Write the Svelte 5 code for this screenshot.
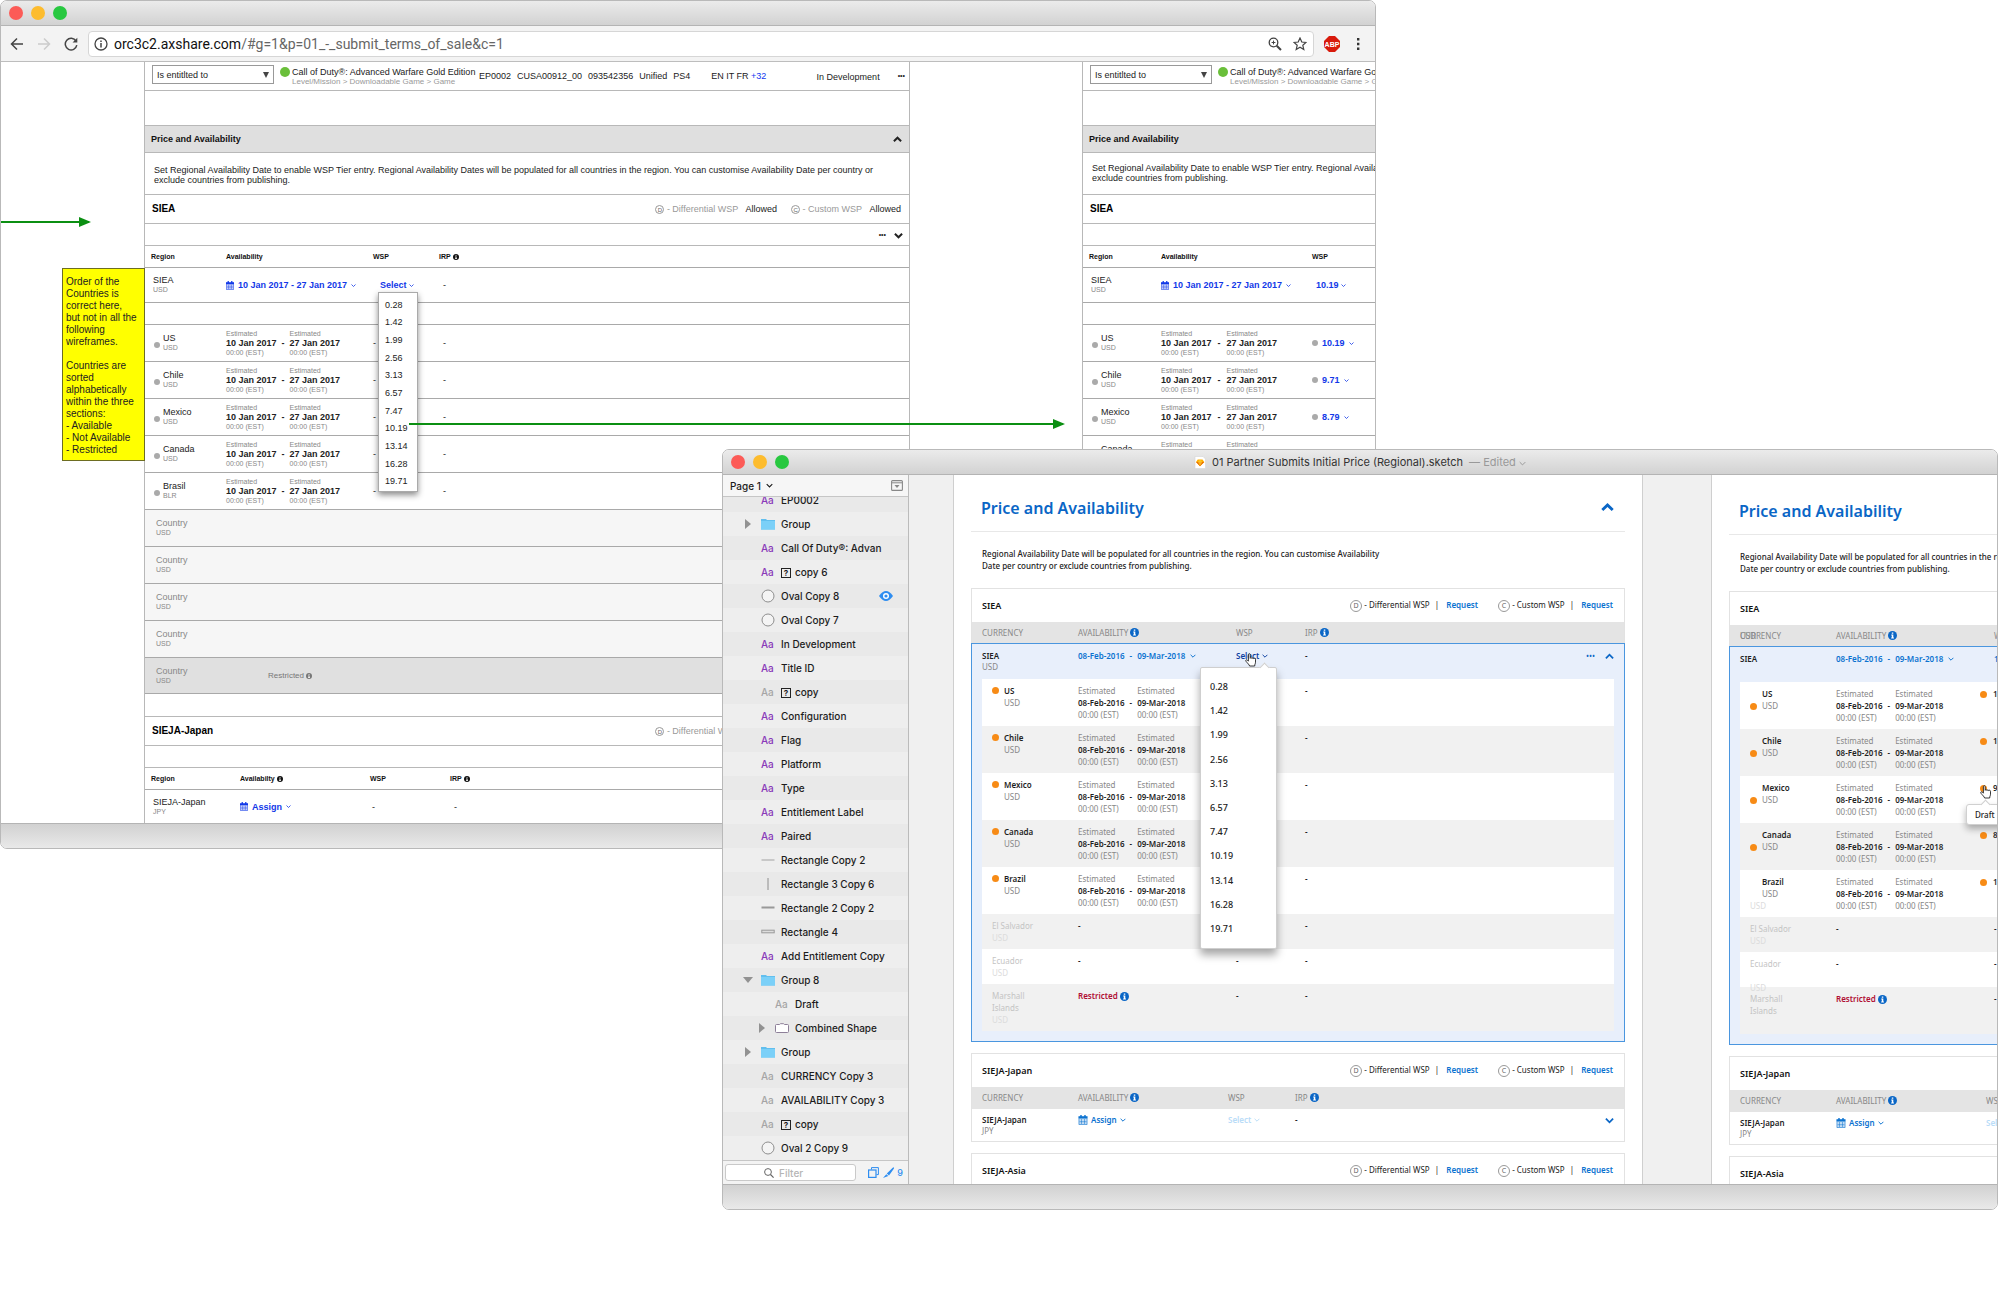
<script lang="ts">
	/**
	 * Desktop with two overlapping windows: the wireframe in a browser and the
	 * visual design of the same pricing table in a design tool.
	 */

	interface Layer {
		name: string;
		icon: 'text' | 'muted' | 'folder' | 'oval' | 'line' | 'vline' | 'bar' | 'box' | 'shape';
		glyph?: boolean;
		open?: boolean;
		closed?: boolean;
		nested?: boolean;
		eye?: boolean;
	}

	const prices = ['0.28', '1.42', '1.99', '2.56', '3.13', '6.57', '7.47', '10.19', '13.14', '16.28', '19.71'];

	const wireCountries = [
		{ name: 'US', currency: 'USD', wsp: '10.19' },
		{ name: 'Chile', currency: 'USD', wsp: '9.71' },
		{ name: 'Mexico', currency: 'USD', wsp: '8.79' },
		{ name: 'Canada', currency: 'USD', wsp: '8.79' },
		{ name: 'Brasil', currency: 'BLR', wsp: '10.19' }
	];

	const countries = [
		{ name: 'US', wsp: '10.19' },
		{ name: 'Chile', wsp: '10.19' },
		{ name: 'Mexico', wsp: '9.71' },
		{ name: 'Canada', wsp: '8.79' },
		{ name: 'Brazil', wsp: '10.19' }
	];

	const layers: Layer[] = [
		{ name: 'EP0002', icon: 'text' },
		{ name: 'Group', icon: 'folder', closed: true },
		{ name: 'Call Of Duty®: Advan', icon: 'text' },
		{ name: 'copy 6', icon: 'text', glyph: true },
		{ name: 'Oval Copy 8', icon: 'oval', eye: true },
		{ name: 'Oval Copy 7', icon: 'oval' },
		{ name: 'In Development', icon: 'text' },
		{ name: 'Title ID', icon: 'text' },
		{ name: 'copy', icon: 'muted', glyph: true },
		{ name: 'Configuration', icon: 'text' },
		{ name: 'Flag', icon: 'text' },
		{ name: 'Platform', icon: 'text' },
		{ name: 'Type', icon: 'text' },
		{ name: 'Entitlement Label', icon: 'text' },
		{ name: 'Paired', icon: 'text' },
		{ name: 'Rectangle Copy 2', icon: 'line' },
		{ name: 'Rectangle 3 Copy 6', icon: 'vline' },
		{ name: 'Rectangle 2 Copy 2', icon: 'bar' },
		{ name: 'Rectangle 4', icon: 'box' },
		{ name: 'Add Entitlement Copy', icon: 'text' },
		{ name: 'Group 8', icon: 'folder', open: true },
		{ name: 'Draft', icon: 'muted', nested: true },
		{ name: 'Combined Shape', icon: 'shape', nested: true, closed: true },
		{ name: 'Group', icon: 'folder', closed: true },
		{ name: 'CURRENCY Copy 3', icon: 'muted' },
		{ name: 'AVAILABILITY Copy 3', icon: 'muted' },
		{ name: 'copy', icon: 'muted', glyph: true },
		{ name: 'Oval 2 Copy 9', icon: 'oval' }
	];
</script>

{#snippet chevron(size: number, up = false, weight = 1.6)}
	<svg class="chevron" width={size} height={size} viewBox="0 0 10 10" aria-hidden="true">
		<path d={up ? 'M1 7l4-4 4 4' : 'M1 3l4 4 4-4'} fill="none" stroke="currentColor" stroke-width={weight} />
	</svg>
{/snippet}

{#snippet info(size: number)}
	<svg class="info" width={size} height={size} viewBox="0 0 10 10" aria-hidden="true">
		<circle cx="5" cy="5" r="5" fill="currentColor" />
		<path d="M4.2 1.6h1.7v1.5H4.2zM3.6 4h2.3v3.2h.7v1H3.5v-1h.7V5h-.6z" fill="#fff" />
	</svg>
{/snippet}

{#snippet calendar()}
	<svg class="calendar" width="10" height="10" viewBox="0 0 9 10" aria-hidden="true">
		<path d="M0 1.5h9V10H0z" fill="currentColor" opacity=".25" />
		<path d="M.5 3.5v6h8v-6M3 4v5M6 4v5M1 6.7h7" fill="none" stroke="currentColor" stroke-width=".5" />
		<path d="M0 1.3h9v2.2H0zM1.8 0h1.4v2H1.8zM5.8 0h1.4v2H5.8z" fill="currentColor" />
	</svg>
{/snippet}

{#snippet hand()}
	<svg class="hand" width="12" height="14" viewBox="0 0 12 14" aria-hidden="true">
		<path
			d="M3.4 8.2V1.7c0-1.4 1.8-1.4 1.8 0v3.6c0-1 1.7-1 1.8.2 0-.9 1.7-.9 1.8.3 0-.8 1.7-.8 1.7.5v2.9c0 1.5-.8 2-.8 3.8H4.6C4.3 11.6 2.7 10.5 1 8.3c-.9-1.3.6-2 1.4-1.1z"
			fill="#fff"
			stroke="#222"
			stroke-width=".9"
		/>
	</svg>
{/snippet}

{#snippet lights()}
	<div class="lights">
		<button class="light close" aria-label="Close"></button>
		<button class="light minimise" aria-label="Minimise"></button>
		<button class="light zoom" aria-label="Zoom"></button>
	</div>
{/snippet}

{#snippet dates(from: string, to: string)}
	<div class="dates">
		<div class="date"><span>Estimated</span><b>{from}</b><span>00:00 (EST)</span></div>
		<b class="dash">-</b>
		<div class="date"><span>Estimated</span><b>{to}</b><span>00:00 (EST)</span></div>
	</div>
{/snippet}

{#snippet wireSection(name: string)}
	<div class="wire-section">
		<h3>{name}</h3>
		<span class="permit"><i class="letter">D</i> - Differential WSP <b>Allowed</b></span>
		<span class="permit"><i class="letter">C</i> - Custom WSP <b>Allowed</b></span>
	</div>
{/snippet}

{#snippet wireBoard(second: boolean)}
	<section class="wire-board" class:second>
		<div class="wire-product">
			<select aria-label="Relationship"><option>Is entitlted to</option></select>
			<i class="green-dot"></i>
			<div class="product-name">
				<span>Call of Duty®: Advanced Warfare Gold Edition</span>
				<small>Level/Mission &gt; Downloadable Game &gt; Game</small>
			</div>
			{#if !second}
				<span class="code">EP0002</span>
				<span class="code">CUSA00912_00</span>
				<span class="code">093542356</span>
				<span class="code">Unified</span>
				<span class="code">PS4</span>
				<span class="languages">EN IT FR <a href="#languages">+32</a></span>
				<span class="stage">In Development</span>
				<button class="more" aria-label="More">•••</button>
			{/if}
		</div>
		<div class="wire-heading">
			<h2>Price and Availability</h2>
			{#if !second}
				<button aria-label="Collapse">{@render chevron(9, true, 2.2)}</button>
			{/if}
		</div>
		<p class="wire-intro">
			Set Regional Availability Date to enable WSP Tier entry. Regional Availability Dates will be populated for all countries in the region. You can customise Availability Date per country or<br />exclude countries from publishing.
		</p>
		{#if second}
			<div class="wire-section"><h3>SIEA</h3></div>
		{:else}
			{@render wireSection('SIEA')}
		{/if}
		<div class="wire-tools">
			{#if !second}
				<button class="more" aria-label="More">•••</button>
				<button aria-label="Expand">{@render chevron(9, false, 2.2)}</button>
			{/if}
		</div>
		<table class="wire-table">
			<colgroup><col class="w-region" /><col class="w-dates" /><col class="w-wsp" /><col /></colgroup>
			<thead>
				<tr>
					<th>Region</th>
					<th>Availability</th>
					<th>WSP</th>
					<th>{#if !second}IRP {@render info(6)}{/if}</th>
				</tr>
			</thead>
			<tbody>
				<tr class="region-row">
					<td><div class="place"><span>SIEA</span><small>USD</small></div></td>
					<td>
						<button class="wire-link">{@render calendar()} <span>10 Jan 2017 - 27 Jan 2017</span> {@render chevron(5)}</button>
					</td>
					<td>
						<div class="anchor">
							<button class="wire-link">{second ? '10.19' : 'Select'} {@render chevron(5)}</button>
							{#if !second}
								<ul class="wire-menu">
									{#each prices as price}
										<li><button>{price}</button></li>
									{/each}
								</ul>
							{/if}
						</div>
					</td>
					<td class="value">{second ? '' : '-'}</td>
				</tr>
				<tr class="gap-row"><td colspan="4"></td></tr>
				{#each second ? wireCountries.slice(0, 4) : wireCountries as country}
					<tr>
						<td>
							<div class="place child"><i class="grey-dot"></i><span>{country.name}</span><small>{country.currency}</small></div>
						</td>
						<td>{@render dates('10 Jan 2017', '27 Jan 2017')}</td>
						<td>
							{#if second}
								<button class="wire-link"><i class="grey-dot"></i> {country.wsp} {@render chevron(5)}</button>
							{:else}
								-
							{/if}
						</td>
						<td class="value">{second ? '' : '-'}</td>
					</tr>
				{/each}
				{#if !second}
					{#each { length: 5 } as _, i}
						<tr class="disabled" class:restricted={i === 4}>
							<td><div class="place"><span>Country</span><small>USD</small></div></td>
							<td colspan="3">
								{#if i === 4}<span class="restricted-note">Restricted {@render info(6)}</span>{/if}
							</td>
						</tr>
					{/each}
				{/if}
			</tbody>
		</table>
		{#if !second}
			<div class="wire-blank"></div>
			{@render wireSection('SIEJA-Japan')}
			<div class="wire-tools"></div>
			<table class="wire-table japan">
				<colgroup><col class="w-region" /><col class="w-dates" /><col class="w-wsp" /><col /></colgroup>
				<thead>
					<tr><th>Region</th><th>Availabilty {@render info(6)}</th><th>WSP</th><th>IRP {@render info(6)}</th></tr>
				</thead>
				<tbody>
					<tr class="region-row">
						<td><div class="place"><span>SIEJA-Japan</span><small>JPY</small></div></td>
						<td><button class="wire-link">{@render calendar()} <span>Assign</span> {@render chevron(5)}</button></td>
						<td class="dash-cell">-</td>
						<td class="value">-</td>
					</tr>
				</tbody>
			</table>
		{/if}
	</section>
{/snippet}

{#snippet cardTitle(name: string, requests: boolean)}
	<div class="card-title">
		<h3>{name}</h3>
		{#if requests}
			<span class="request"><i class="letter">D</i> - Differential WSP <span class="bar">|</span> <a href="#differential">Request</a></span>
			<span class="request"><i class="letter">C</i> - Custom WSP <span class="bar">|</span> <a href="#custom">Request</a></span>
		{/if}
	</div>
{/snippet}

{#snippet designBoard(second: boolean)}
	<section class="board" class:second>
		<div class="board-inner">
			<div class="board-heading">
				<h2>Price and Availability</h2>
				<button aria-label="Collapse">{@render chevron(13, true, 2.2)}</button>
			</div>
			<p class="intro">
				Regional Availability Date will be populated for all countries in the region. You can customise Availability<br />Date per country or exclude countries from publishing.
			</p>
			<div class="card">
				{@render cardTitle('SIEA', !second)}
				<table class="region-table">
					<colgroup><col class="c-edge" /><col class="c-name" /><col class="c-dates" /><col class="c-wsp" /><col /><col class="c-edge" /></colgroup>
					<thead>
						<tr>
							<th></th>
							<th>
								{#if second}<span class="overprint" aria-hidden="true">USD</span>{/if}CURRENCY
							</th>
							<th>AVAILABILITY {@render info(9)}</th>
							<th>WSP</th>
							<th>{#if !second}IRP {@render info(9)}{/if}</th>
							<th></th>
						</tr>
					</thead>
					<tbody>
						<tr class="summary">
							<td></td>
							<td><b>SIEA</b>{#if !second}<span class="currency">USD</span>{/if}</td>
							<td>
								<button class="link range"><span>08-Feb-2016</span><span>-</span><span>09-Mar-2018</span>{@render chevron(6)}</button>
							</td>
							<td>
								<div class="anchor">
									{#if second}
										<button class="link">10.19</button>
									{:else}
										<button class="link select">Select {@render chevron(6)}</button>
										{@render hand()}
										<ul class="menu">
											{#each prices as price}
												<li><button>{price}</button></li>
											{/each}
										</ul>
									{/if}
								</div>
							</td>
							<td>
								{#if !second}
									<div class="summary-end">
										<b>-</b>
										<button aria-label="More">•••</button>
										<button aria-label="Collapse">{@render chevron(9, true, 2)}</button>
									</div>
								{/if}
							</td>
							<td></td>
						</tr>
						{#each countries as country}
							<tr class="country">
								<td></td>
								<td>
									<div class="label">
										{#if !second || country.name !== 'Brazil'}<i class="orange-dot"></i>{/if}
										<b>{country.name}</b>
										<span>USD</span>
										{#if second && country.name === 'Brazil'}<span class="ghost">USD</span>{/if}
									</div>
								</td>
								<td>{@render dates('08-Feb-2016', '09-Mar-2018')}</td>
								<td>
									{#if second}
										<div class="anchor draft-wsp">
											<i class="orange-dot"></i><b>{country.wsp}</b>
											{#if country.name === 'Mexico'}
												{@render hand()}
												<span class="tooltip" role="tooltip">Draft</span>
											{/if}
										</div>
									{:else}
										<b>-</b>
									{/if}
								</td>
								<td><b>{second ? '' : '-'}</b></td>
								<td></td>
							</tr>
						{/each}
						<tr class="country off">
							<td></td>
							<td><div class="off-label">El Salvador<span>USD</span></div></td>
							<td><b>-</b></td><td><b>-</b></td><td><b>{second ? '' : '-'}</b></td><td></td>
						</tr>
						<tr class="country off">
							<td></td>
							<td><div class="off-label">Ecuador{#if second}<br />&nbsp;{/if}<span>USD</span></div></td>
							<td><b>-</b></td><td><b>-</b></td><td><b>{second ? '' : '-'}</b></td><td></td>
						</tr>
						<tr class="country off tall">
							<td></td>
							<td><div class="off-label">Marshall<br />Islands{#if !second}<span>USD</span>{/if}</div></td>
							<td><strong>Restricted {@render info(9)}</strong></td><td><b>-</b></td><td><b>{second ? '' : '-'}</b></td><td></td>
						</tr>
						<tr class="foot"><td colspan="6"></td></tr>
					</tbody>
				</table>
			</div>
			<div class="card">
				{@render cardTitle('SIEJA-Japan', !second)}
				<table class="region-table japan">
					<colgroup><col class="c-edge" /><col class="c-name" /><col class="c-dates" /><col class="c-wsp" /><col /><col class="c-edge" /></colgroup>
					<thead>
						<tr>
							<th></th>
							<th>CURRENCY</th>
							<th>AVAILABILITY {@render info(9)}</th>
							<th>WSP</th>
							<th>{#if !second}IRP {@render info(9)}{/if}</th>
							<th></th>
						</tr>
					</thead>
					<tbody>
						<tr class="plain">
							<td></td>
							<td><b>SIEJA-Japan</b><span class="currency">JPY</span></td>
							<td><button class="link">{@render calendar()} Assign {@render chevron(6)}</button></td>
							<td><button class="link faded" disabled>Select {@render chevron(6)}</button></td>
							<td>
								{#if !second}
									<div class="summary-end">
										<b>-</b>
										<button aria-label="Expand">{@render chevron(9, false, 2)}</button>
									</div>
								{/if}
							</td>
							<td></td>
						</tr>
					</tbody>
				</table>
			</div>
			<div class="card last">
				{@render cardTitle('SIEJA-Asia', !second)}
			</div>
		</div>
	</section>
{/snippet}

<main class="desktop">
	<section class="window browser" aria-label="Browser">
		<header class="titlebar">{@render lights()}</header>
		<div class="toolbar">
			<button aria-label="Back">
				<svg width="14" height="14" viewBox="0 0 14 14"><path d="M13 7H2M7 1.5L1.5 7 7 12.5" fill="none" stroke="#444" stroke-width="1.5" /></svg>
			</button>
			<button aria-label="Forward" disabled>
				<svg width="14" height="14" viewBox="0 0 14 14"><path d="M1 7h11M7 1.5L12.5 7 7 12.5" fill="none" stroke="#ccc" stroke-width="1.5" /></svg>
			</button>
			<button aria-label="Reload">
				<svg width="14" height="14" viewBox="0 0 14 14">
					<path d="M12 4A5.8 5.8 0 1 0 12.8 8.2" fill="none" stroke="#444" stroke-width="1.5" />
					<path d="M13.3.8v4.7H8.6z" fill="#444" />
				</svg>
			</button>
			<div class="address">
				<svg width="14" height="14" viewBox="0 0 14 14" aria-hidden="true">
					<circle cx="7" cy="7" r="6" fill="none" stroke="#444" stroke-width="1.3" />
					<path d="M7 6v4.5M7 3.4v1.5" stroke="#444" stroke-width="1.5" />
				</svg>
				<a href="#g=1&p=01_-_submit_terms_of_sale&c=1"><b>orc3c2.axshare.com</b>/#g=1&amp;p=01_-_submit_terms_of_sale&amp;c=1</a>
				<button aria-label="Zoom in">
					<svg width="14" height="14" viewBox="0 0 14 14">
						<circle cx="5.5" cy="5.5" r="4.3" fill="none" stroke="#444" stroke-width="1.3" />
						<path d="M8.7 8.7L13 13" stroke="#444" stroke-width="2" />
						<path d="M5.5 3.6v3.8M3.6 5.5h3.8" stroke="#444" />
					</svg>
				</button>
				<button aria-label="Bookmark">
					<svg width="14" height="14" viewBox="0 0 14 14">
						<path d="M7 1l1.8 4 4.2.4-3.200 2.900 1 4.200L7 10.300l-3.800 2.200 1-4.200L1 5.400 5.200 5z" fill="none" stroke="#444" stroke-width="1.2" />
					</svg>
				</button>
			</div>
			<button class="adblock" aria-label="Adblock">
				<svg width="16" height="16" viewBox="0 0 16 16">
					<path d="M5 0h6l5 5v6l-5 5H5l-5-5V5z" fill="#d81a0c" />
					<text x="8" y="10.5" fill="#fff" font-size="7" font-weight="700" text-anchor="middle" font-family="Liberation Sans, sans-serif">ABP</text>
				</svg>
			</button>
			<button aria-label="Menu">
				<svg width="4" height="14" viewBox="0 0 4 14"><path d="M1 1h2.4v2.4H1zM1 5.8h2.4v2.4H1zM1 10.6h2.4V13H1z" fill="#333" /></svg>
			</button>
		</div>
		<div class="wire-canvas">
			<aside class="note">
				<p>Order of the Countries is correct here,<br />but not in all the following wireframes.</p>
				<p>Countries are sorted alphabetically within the three sections:<br />- Available<br />- Not Available<br />- Restricted</p>
			</aside>
			<i class="arrow incoming"></i>
			<i class="arrow outgoing"></i>
			{@render wireBoard(false)}
			{@render wireBoard(true)}
		</div>
		<footer class="statusbar"></footer>
	</section>

	<section class="window sketch" aria-label="Design tool">
		<header class="titlebar">
			{@render lights()}
			<h1>
				<svg width="12" height="13" viewBox="0 0 12 13" aria-hidden="true">
					<path d="M1 .5h8l2.5 2.5v9.5H1z" fill="#fff" stroke="#d5d5d5" stroke-width=".6" />
					<path d="M3.7 3.5h4.8L10.3 6 6 10.3 2 6z" fill="#fdad00" />
					<path d="M2 6h8.3L6 10.3z" fill="#ea6c00" />
					<path d="M4 6l2-2.5L8.2 6 6 10z" fill="#fdd231" opacity=".7" />
				</svg>
				01 Partner Submits Initial Price (Regional).sketch <span>— Edited {@render chevron(7, false, 1.4)}</span>
			</h1>
		</header>
		<div class="workspace">
			<aside class="sidebar">
				<div class="pages">
					<button>Page 1 {@render chevron(7)}</button>
					<button aria-label="Toggle page list">
						<svg width="12" height="11" viewBox="0 0 12 11">
							<rect x=".6" y=".6" width="10.8" height="9.8" rx="1" fill="none" stroke="#888" stroke-width="1.1" />
							<path d="M1 2.8h10" stroke="#888" />
							<path d="M3.5 5h5L6 8z" fill="#888" />
						</svg>
					</button>
				</div>
				<div class="layers">
					<ul>
						{#each layers as layer}
							<li class:nested={layer.nested}>
								<span class="expander">
									{#if layer.closed}
										<svg width="6" height="10" viewBox="0 0 6 10" aria-hidden="true"><path d="M0 0l6 5-6 5z" fill="#929292" /></svg>
									{:else if layer.open}
										<svg width="10" height="6" viewBox="0 0 10 6" aria-hidden="true"><path d="M0 0h10L5 6z" fill="#929292" /></svg>
									{/if}
								</span>
								{#if layer.icon === 'text' || layer.icon === 'muted'}
									<span class="aa" class:muted={layer.icon === 'muted'}>Aa</span>
								{:else}
									<svg class="layer-icon" width="14" height="14" viewBox="0 0 14 14" aria-hidden="true">
										{#if layer.icon === 'folder'}
											<path d="M0 2h5l1 1h8v9.5H0z" fill="#62bfee" /><path d="M0 4h14v8.5H0z" fill="#7bd0f8" />
										{:else if layer.icon === 'oval'}
											<circle cx="7" cy="7" r="6" fill="#f4f4f4" stroke="#8e8e8e" />
										{:else if layer.icon === 'line'}
											<path d="M.5 7h13" stroke="#a2a2a2" />
										{:else if layer.icon === 'vline'}
											<path d="M7 1v12" stroke="#8e8e8e" />
										{:else if layer.icon === 'bar'}
											<path d="M.5 6.5h13" stroke="#999" stroke-width="2" />
										{:else if layer.icon === 'box'}
											<rect x=".8" y="5.2" width="12.4" height="2.6" fill="#ddd" stroke="#999" />
										{:else}
											<path d="M1.5 3.5h3l1-.8h3l1 .8h3q1 0 1 1v6q0 1-1 1h-11q-1 0-1-1v-6q0-1 1-1z" fill="#fff" stroke="#8d7f98" />
										{/if}
									</svg>
								{/if}
								<span class="layer-name">{#if layer.glyph}<i>?</i>{/if}{layer.name}</span>
								{#if layer.eye}
									<svg class="eye" width="14" height="10" viewBox="0 0 14 10" aria-hidden="true">
										<path d="M0 5q7-10 14 0-7 10-14 0z" fill="#2e8df0" />
										<circle cx="7" cy="5" r="3" fill="#fff" /><circle cx="7" cy="5" r="1.6" fill="#2e8df0" />
									</svg>
								{/if}
							</li>
						{/each}
					</ul>
				</div>
				<div class="filter">
					<label>
						<svg width="10" height="10" viewBox="0 0 10 10" aria-hidden="true">
							<circle cx="4" cy="4" r="3.4" fill="none" stroke="#666" /><path d="M6.5 6.5L9.6 9.6" stroke="#666" stroke-width="1.2" />
						</svg>
						<input type="text" placeholder="Filter" aria-label="Filter" />
					</label>
					<button aria-label="Show slices">
						<svg width="11" height="11" viewBox="0 0 11 11">
							<path d="M3.5 2.5V.6h6.9v7H8.5" fill="none" stroke="#2e8df0" /><rect x=".6" y="3" width="7.4" height="7.4" fill="none" stroke="#2e8df0" stroke-width="1.2" />
						</svg>
					</button>
					<button class="edits">
						<svg width="11" height="11" viewBox="0 0 11 11" aria-hidden="true">
							<path d="M10.5 0L11 1.5 6 8.5 3.8 6.6zM3.3 7.2l2 1.8L0 11z" fill="#2e8df0" />
						</svg>
						9
					</button>
				</div>
			</aside>
			<div class="canvas">
				{@render designBoard(false)}
				{@render designBoard(true)}
			</div>
		</div>
		<footer class="statusbar"></footer>
	</section>
</main>

<style>
	:global(body) {
		margin: 0;
		background: #fff;
	}

	.desktop {
		position: relative;
		min-height: 100vh;
		overflow: hidden;
		font-family: 'Liberation Sans', Arial, sans-serif;
		color: #222;
	}

	.desktop *,
	.desktop *::before,
	.desktop *::after {
		box-sizing: border-box;
	}

	h1,
	h2,
	h3,
	p,
	ul {
		margin: 0;
		padding: 0;
	}

	ul {
		list-style: none;
	}

	i {
		font-style: normal;
	}

	a {
		text-decoration: none;
	}

	button {
		padding: 0;
		border: none;
		background: none;
		font: inherit;
		color: inherit;
		line-height: inherit;
		white-space: nowrap;
	}

	table {
		width: 100%;
		border-collapse: separate;
		border-spacing: 0;
		table-layout: fixed;
	}

	th,
	td {
		padding: 0;
		text-align: left;
	}

	svg {
		flex: none;
	}

	/* Windows */

	.window {
		position: absolute;
		display: flex;
		flex-direction: column;
		overflow: hidden;
		background: #fff;
		border: 1px solid #b9b9b9;
		border-radius: 7px;
	}

	.browser {
		top: 0;
		left: 0;
		right: 622px;
	}

	.sketch {
		top: 449px;
		left: 722px;
		right: 0;
	}

	.titlebar {
		position: relative;
		display: flex;
		align-items: center;
		justify-content: center;
		height: 25px;
		background: linear-gradient(#ebebeb, #d2d2d2);
		border-bottom: 1px solid #b4b4b4;
	}

	.statusbar {
		height: 25px;
		background: linear-gradient(#d1d1d1, #e9e9e9);
		border-top: 1px solid #b4b4b4;
	}

	.lights {
		position: absolute;
		left: 8px;
		display: flex;
		gap: 8px;
	}

	.light {
		width: 14px;
		height: 14px;
		border-radius: 50%;
	}

	.close {
		background: #fc5b57;
	}

	.minimise {
		background: #fdbc2e;
	}

	.zoom {
		background: #28c840;
	}

	.chevron,
	.info,
	.calendar {
		display: inline-block;
		vertical-align: middle;
	}

	.anchor {
		position: relative;
	}

	.letter {
		display: inline-flex;
		align-items: center;
		justify-content: center;
		border: 1px solid #999;
		border-radius: 50%;
		color: #666;
	}

	/* Browser toolbar */

	.toolbar {
		display: flex;
		align-items: center;
		gap: 13px;
		height: 36px;
		padding: 0 15px 0 9px;
		background: #f3f3f3;
		border-bottom: 1px solid #bdbdbd;
	}

	.toolbar button {
		display: flex;
	}

	.toolbar .adblock {
		margin-right: 3px;
	}

	.address {
		display: flex;
		flex: 1;
		align-items: center;
		gap: 11px;
		height: 26px;
		margin: 0 -3px;
		padding: 0 6px 0 5px;
		background: #fff;
		border: 1px solid #d6d6d6;
		border-radius: 4px;
	}

	.address a {
		flex: 1;
		margin-left: -5px;
		font-family: Roboto, sans-serif;
		font-size: 14px;
		color: #666;
	}

	.address b {
		font-weight: 400;
		color: #111;
	}

	/* Wireframe canvas */

	.wire-canvas {
		position: relative;
		display: flex;
		gap: 172px;
		padding-left: 143px;
		font-size: 9px;
		line-height: 10px;
	}

	.note {
		position: absolute;
		top: 206px;
		left: 61px;
		width: 83px;
		height: 193px;
		padding: 7px 0 0 3px;
		background: #ff0;
		border: 1px solid #6d6d22;
		font-size: 10px;
		line-height: 12px;
		color: #222;
	}

	.note p + p {
		margin-top: 12px;
	}

	.arrow {
		position: absolute;
		z-index: 3;
		height: 2px;
		background: #0b8f12;
	}

	.arrow::after {
		content: '';
		position: absolute;
		top: -4px;
		right: -2px;
		border: 5px solid transparent;
		border-left: 12px solid #0b8f12;
		border-right: 0;
	}

	.incoming {
		top: 159px;
		left: 0;
		width: 88px;
	}

	.outgoing {
		top: 361px;
		left: 408px;
		width: 654px;
	}

	.wire-board {
		flex: 1;
		min-width: 0;
		border: 1px solid #b8b8b8;
		border-width: 0 1px;
	}

	.wire-board.second {
		flex: 0 0 293px;
		overflow: hidden;
		border-right: 0;
		white-space: nowrap;
	}

	.wire-product {
		display: flex;
		align-items: center;
		height: 29px;
		padding-left: 7px;
		border-bottom: 1px solid #b8b8b8;
		white-space: nowrap;
	}

	select {
		flex: none;
		width: 122px;
		height: 19px;
		margin-top: -3px;
		padding: 0 0 0 4px;
		border: 1px solid #999;
		border-radius: 0;
		appearance: none;
		background: #fff url("data:image/svg+xml,%3Csvg xmlns='http://www.w3.org/2000/svg' width='6' height='6'%3E%3Cpath d='M0 0h6L3 6z' fill='%23444'/%3E%3C/svg%3E") no-repeat right 4px center;
		font: 9px 'Liberation Sans', Arial, sans-serif;
		color: #222;
	}

	.green-dot {
		flex: none;
		width: 10px;
		height: 10px;
		margin: -9px 2px 0 6px;
		border-radius: 50%;
		background: #6abf3a;
	}

	.product-name {
		flex: none;
		width: 187px;
	}

	.product-name span,
	.product-name small {
		display: block;
	}

	small {
		font-size: 7px;
		color: #888;
	}

	.product-name small {
		font-size: 8px;
		line-height: 9px;
		color: #999;
	}

	.code {
		flex: none;
		margin-right: 6px;
	}

	.languages {
		flex: none;
		margin-left: 15px;
	}

	.languages a {
		color: #1138f0;
	}

	.stage {
		margin: 2px 18px 0 auto;
	}

	.wire-product .more {
		margin-right: 4px;
	}

	.more {
		font-size: 7px;
	}

	.wire-heading {
		display: flex;
		align-items: center;
		justify-content: space-between;
		height: 28px;
		margin-top: 34px;
		padding: 0 7px 0 6px;
		background: #dfdfdf;
		border-top: 1px solid #b8b8b8;
		border-bottom: 1px solid #b8b8b8;
	}

	.wire-heading h2 {
		font-size: 9px;
		color: #111;
	}

	.wire-intro {
		height: 41px;
		padding: 12px 0 0 9px;
		white-space: nowrap;
	}

	.second .wire-intro {
		padding-top: 10px;
	}

	.wire-section {
		display: flex;
		align-items: center;
		height: 30px;
		padding: 0 8px 0 7px;
		border-top: 1px solid #b8b8b8;
		border-bottom: 1px solid #b8b8b8;
	}

	.wire-section h3 {
		flex: 1;
		font-size: 10px;
		color: #000;
	}

	.permit {
		margin-left: 14px;
		color: #999;
		white-space: nowrap;
	}

	.permit b {
		margin-left: 5px;
		font-weight: 400;
		color: #222;
	}

	.permit .letter {
		width: 9px;
		height: 9px;
		font-size: 6px;
	}

	.wire-tools {
		display: flex;
		align-items: center;
		justify-content: flex-end;
		gap: 8px;
		height: 21px;
		padding-right: 6px;
	}

	.w-region {
		width: 81px;
	}

	.w-dates {
		width: 147px;
	}

	.w-wsp {
		width: 66px;
	}

	.second .w-region {
		width: 78px;
	}

	.second .w-dates {
		width: 151px;
	}

	.japan .w-region {
		width: 95px;
	}

	.japan .w-dates {
		width: 130px;
	}

	.japan .w-wsp {
		width: 80px;
	}

	.wire-table th {
		height: 22px;
		border-top: 1px solid #b8b8b8;
		font-size: 7px;
		color: #111;
	}

	.wire-table th:first-child {
		padding-left: 6px;
	}

	.wire-table td {
		height: 37px;
		border-top: 1px solid #a9a9a9;
	}

	.wire-table .region-row td {
		height: 35px;
	}

	.wire-table.japan .region-row td {
		height: 34px;
	}

	.wire-table .gap-row td {
		height: 22px;
	}

	.wire-table .value {
		padding-left: 4px;
	}

	.wire-table .dash-cell {
		padding-left: 2px;
	}

	.wire-table .disabled td {
		background: #f6f6f6;
		color: #888;
	}

	.wire-table .restricted td {
		background: #e0e0e0;
	}

	.wire-table .disabled:last-child td {
		border-bottom: 1px solid #a9a9a9;
	}

	.restricted-note {
		margin-left: 42px;
		font-size: 8px;
		color: #777;
	}

	.place {
		position: relative;
		padding-left: 8px;
	}

	.place.child {
		padding-left: 18px;
	}

	.disabled .place {
		padding-left: 11px;
	}

	.place span,
	.place small {
		display: block;
	}

	.grey-dot {
		display: inline-block;
		width: 6px;
		height: 6px;
		border-radius: 50%;
		background: #aaa;
	}

	.place .grey-dot {
		position: absolute;
		top: 9px;
		left: 9px;
	}

	.wire-link {
		display: flex;
		align-items: center;
		gap: 4px;
		font-weight: 700;
		color: #1138e8;
	}

	.wire-link .calendar {
		width: 8px;
		height: 9px;
	}

	.wire-table .anchor .wire-link {
		margin-left: 7px;
		gap: 2px;
	}

	.second .anchor .wire-link {
		margin-left: 4px;
	}

	.dates {
		display: flex;
		align-items: center;
		gap: 5px;
	}

	.second .wire-table .dates {
		gap: 6px;
	}

	.date span,
	.date b {
		display: block;
	}

	.wire-table .date span {
		font-size: 7px;
		line-height: 9px;
		color: #888;
	}

	.wire-menu {
		position: absolute;
		top: 12px;
		left: 5px;
		z-index: 2;
		display: flex;
		flex-direction: column;
		width: 40px;
		height: 200px;
		padding: 3px 0 1px;
		background: #fff;
		border: 1px solid #aaa;
		box-shadow: 0 3px 6px rgb(0 0 0 / 45%);
	}

	.wire-menu li,
	.menu li {
		flex: 1;
	}

	.wire-menu button,
	.menu button {
		display: block;
		width: 100%;
		height: 100%;
		padding-left: 6px;
		text-align: left;
	}

	.wire-blank {
		height: 22px;
	}

	/* Design tool */

	.sketch h1 {
		display: flex;
		align-items: center;
		gap: 6px;
		font: 400 11px Inter, sans-serif;
		color: #333;
	}

	.sketch h1 span {
		color: #999;
	}

	.workspace {
		display: flex;
	}

	.sidebar {
		display: flex;
		flex: none;
		flex-direction: column;
		width: 186px;
		background: #ededed;
		border-right: 1px solid #bbb;
		font: 500 10px/12px Inter, sans-serif;
		color: #1c1c1c;
	}

	.pages {
		display: flex;
		align-items: center;
		justify-content: space-between;
		height: 22px;
		padding: 0 5px 0 7px;
		background: #f6f6f6;
		border-bottom: 1px solid #c6c6c6;
	}

	.pages button {
		display: flex;
		align-items: center;
		gap: 5px;
	}

	.layers {
		overflow: hidden;
	}

	/* The list is scrolled by part of its first row */
	.layers ul {
		margin-top: -9px;
	}

	.layers li {
		display: flex;
		align-items: center;
		height: 24px;
		padding-left: 19px;
		background: #eee;
	}

	.layers li:nth-child(odd) {
		background: #e9e9e9;
	}

	.layers li.nested {
		padding-left: 33px;
	}

	.expander {
		display: flex;
		justify-content: center;
		width: 12px;
		margin-right: 7px;
	}

	.aa {
		width: 14px;
		color: #8a3ab9;
	}

	.aa.muted {
		color: #a5a5a5;
	}

	.layer-name {
		flex: 1;
		margin-left: 6px;
		white-space: nowrap;
	}

	.layer-name i {
		display: inline-block;
		width: 10px;
		height: 10px;
		margin-right: 4px;
		border: 1px solid #222;
		font-size: 8px;
		font-weight: 700;
		line-height: 8px;
		text-align: center;
	}

	.eye {
		margin-right: 15px;
	}

	.filter {
		display: flex;
		align-items: center;
		gap: 4px;
		height: 24px;
		padding: 0 5px 0 2px;
		background: #f3f3f3;
		border-top: 1px solid #c6c6c6;
	}

	.filter label {
		display: flex;
		align-items: center;
		gap: 5px;
		width: 132px;
		height: 17px;
		margin-right: 8px;
		padding-left: 38px;
		background: #fff;
		border: 1px solid #c9c9c9;
		border-radius: 3px;
	}

	.filter input {
		width: 70px;
		padding: 0;
		border: none;
		outline: none;
		background: none;
		font: inherit;
	}

	.filter input::placeholder {
		color: #b5b5b5;
	}

	.filter button {
		display: flex;
		align-items: center;
		gap: 3px;
		font-size: 9px;
		color: #2e8df0;
	}

	.canvas {
		display: flex;
		flex: 1;
		gap: 68px;
		min-width: 0;
		padding-left: 44px;
		background: #f0f0f0;
		font: 8px/12px 'Noto Sans', sans-serif;
	}

	.board {
		flex: 1;
		min-width: 0;
		height: 709px;
		overflow: hidden;
		background: #fff;
		border: 1px solid #cfcfcf;
		border-width: 0 1px;
	}

	.board.second {
		flex: 0 0 286px;
		border-right: 0;
	}

	.board-inner {
		padding: 0 17px;
	}

	.second .board-inner {
		width: 690px;
		padding-top: 3px;
	}

	.board b {
		font-weight: 600;
		color: #1f1f1f;
	}

	.board-heading {
		display: flex;
		align-items: center;
		justify-content: space-between;
		height: 57px;
		padding: 9px 11px 0 10px;
		border-bottom: 1px solid #e8e8e8;
		color: #0a66c6;
	}

	.board-heading h2 {
		font: 600 16px 'Noto Sans', sans-serif;
	}

	.intro {
		height: 56px;
		padding: 16px 0 0 11px;
		font-weight: 500;
		color: #222;
		white-space: nowrap;
	}

	.card {
		margin-bottom: 11px;
		border: 1px solid #e2e2e2;
	}

	.card.last {
		margin: 0;
		border-bottom: 0;
	}

	.card-title {
		display: flex;
		align-items: center;
		height: 33px;
		padding: 0 11px 0 10px;
	}

	.card-title h3 {
		flex: 1;
		font-size: 9px;
		font-weight: 600;
		color: #111;
	}

	.request {
		margin-left: 20px;
	}

	.request .letter {
		width: 12px;
		height: 12px;
		font-size: 7px;
	}

	.request .bar {
		margin: 0 5px 0 3px;
	}

	.request a {
		font-weight: 600;
		color: #0a72d0;
	}

	.c-edge {
		width: 10px;
	}

	.c-name {
		width: 96px;
	}

	.c-dates {
		width: 158px;
	}

	.c-wsp {
		width: 69px;
	}

	.japan .c-dates {
		width: 150px;
	}

	.japan .c-wsp {
		width: 67px;
	}

	.region-table th {
		height: 22px;
		background: #e4e4e4;
		font-weight: 400;
		color: #888;
	}

	.region-table .info {
		color: #0a66c6;
	}

	.region-table th .info {
		margin-top: -3px;
	}

	.overprint {
		position: absolute;
	}

	.region-table td {
		vertical-align: top;
	}

	.region-table:not(.japan) tbody {
		outline: 1px solid #4a96df;
	}

	.summary td,
	.foot td {
		height: 35px;
		padding-top: 6px;
		background: #e8effb;
	}

	.foot td {
		height: 10px;
		padding: 0;
	}

	.plain td {
		height: 32px;
		padding-top: 5px;
	}

	.currency {
		display: block;
		line-height: 10px;
		color: #888;
	}

	.link {
		display: inline-flex;
		align-items: center;
		gap: 3px;
		font-weight: 600;
		color: #0a72d0;
	}

	.link.range {
		gap: 5px;
	}

	.link.select {
		color: #0d3fa0;
	}

	.link.faded {
		color: #b9dcf8;
	}

	.summary-end {
		display: flex;
		align-items: center;
		gap: 10px;
		color: #0a66c6;
	}

	.summary-end b {
		flex: 1;
	}

	.country td {
		height: 47px;
		padding-top: 6px;
		background: #fff;
	}

	.country:nth-child(odd) td {
		background: #f1f1f1;
	}

	.region-table .country td:first-child,
	.region-table .country td:last-child {
		background: #e8effb;
	}

	.country.off td {
		height: 35px;
	}

	.country.off.tall td {
		height: 47px;
	}

	.label {
		position: relative;
		height: 36px;
		padding-left: 22px;
		color: #888;
	}

	.label b,
	.label span {
		display: block;
	}

	.orange-dot {
		width: 7px;
		height: 7px;
		border-radius: 50%;
		background: #f78b16;
	}

	.label .orange-dot {
		position: absolute;
		top: 2px;
		left: 10px;
	}

	.second .label .orange-dot {
		top: 15px;
	}

	.label .ghost,
	.off-label span {
		color: #dcdcdc;
	}

	.label .ghost {
		margin-left: -12px;
	}

	.off-label {
		height: 24px;
		padding-left: 10px;
		color: #c4c4c4;
	}

	.off-label span {
		display: block;
	}

	.board .date span {
		color: #888;
	}

	strong {
		font-weight: 600;
		color: #b00f33;
	}

	.hand {
		position: absolute;
		top: 3px;
		left: 9px;
		z-index: 3;
	}

	.menu {
		position: absolute;
		top: 17px;
		left: -36px;
		z-index: 2;
		display: flex;
		flex-direction: column;
		width: 77px;
		height: 282px;
		padding: 7px 0;
		background: #fff;
		border: 1px solid #cfcfcf;
		border-radius: 2px;
		box-shadow: 0 6px 9px rgb(0 0 0 / 35%);
	}

	.menu::before,
	.tooltip::before {
		content: '';
		position: absolute;
		top: -4px;
		right: 8px;
		width: 7px;
		height: 7px;
		background: #fff;
		border: 1px solid #cfcfcf;
		border-width: 1px 0 0 1px;
		transform: rotate(45deg);
	}

	.menu button {
		padding-left: 9px;
		font-size: 9px;
		font-weight: 500;
		color: #222;
	}

	.draft-wsp {
		display: flex;
		align-items: center;
		gap: 6px;
		margin-left: -14px;
	}

	.draft-wsp .hand {
		left: 0;
	}

	.tooltip {
		position: absolute;
		top: 22px;
		left: -14px;
		z-index: 2;
		width: 40px;
		padding: 4px 0 3px 8px;
		background: #fff;
		border: 1px solid #d0d0d0;
		border-radius: 3px;
		box-shadow: 0 4px 7px rgb(0 0 0 / 30%);
		font-weight: 500;
	}

	.tooltip::before {
		right: 16px;
	}
</style>
